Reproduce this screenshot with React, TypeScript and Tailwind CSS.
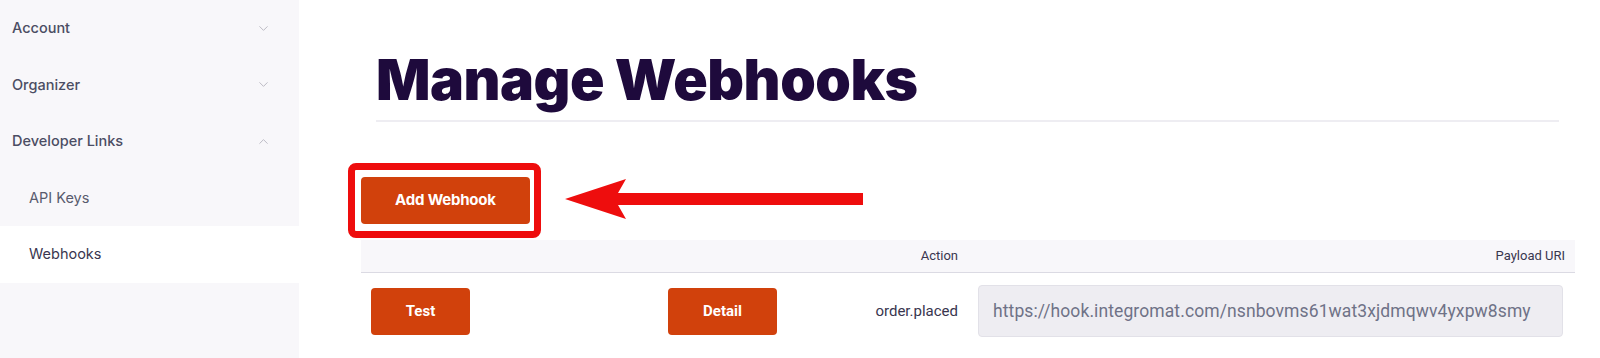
import { ChevronDown, ChevronUp } from 'lucide-react';

const sideItems = [
  { label: 'Account', open: false },
  { label: 'Organizer', open: false },
  { label: 'Developer Links', open: true },
];

function Sidebar() {
  return (
    <aside className="w-[299px] shrink-0 bg-[#f8f7fa] font-['Inter',sans-serif]">
      {sideItems.map((item) => (
        <div key={item.label} className="h-[56.5px] flex items-center justify-between pl-[12px] pr-[28px]">
          <span className="text-[14.5px] font-medium text-[#4b4d63]">{item.label}</span>
          {item.open ? (
            <ChevronUp className="w-[15px] h-[15px] text-[#b7b6c0]" strokeWidth={1.5} />
          ) : (
            <ChevronDown className="w-[15px] h-[15px] text-[#b7b6c0]" strokeWidth={1.5} />
          )}
        </div>
      ))}
      <div className="h-[56.5px] flex items-center pl-[29px] text-[14.5px] text-[#585b6e]">API Keys</div>
      <div className="h-[56.5px] flex items-center pl-[29px] text-[14.5px] text-[#39364f] bg-white">Webhooks</div>
    </aside>
  );
}

function Arrow() {
  return (
    <svg
      className="absolute left-[202px] top-[1px]"
      width="302"
      height="42"
      viewBox="0 0 302 42"
    >
      <path
        d="M2 21 L63 1 L55 15 L300 15 L300 27 L55 27 L63 41 Z"
        fill="#ee0d0d"
      />
    </svg>
  );
}

export default function App() {
  return (
    <div className="flex w-[1600px] h-[358px] overflow-hidden bg-white">
      <Sidebar />
      <main className="flex-1 pl-[62px] pr-[25px]">
        <div className="ml-[15px] mr-[16px]">
          <h1 className="mt-[51px] text-[57px] leading-[57px] font-black text-[#1e0a3c] tracking-[-0.5px] font-['Inter',sans-serif]">
            Manage Webhooks
          </h1>
          <div className="mt-[12px] h-[2px] bg-[#eeedf2]" />
        </div>

        <div className="relative mt-[55px] w-[169px]">
          <div className="absolute -left-[13px] -right-[11px] -top-[14px] -bottom-[14px] border-[7px] border-[#ee0d0d] rounded-[8px]" />
          <button className="w-[169px] h-[47px] bg-[#d1410c] rounded-[4px] text-white text-[15px] font-bold font-['Inter',sans-serif] tracking-[-0.2px]">
            Add Webhook
          </button>
          <Arrow />
        </div>

        <div className="mt-[16px] font-['Roboto',sans-serif]">
          <div className="grid grid-cols-[297px_129px_181px_1fr] h-[33px] items-center bg-[#f8f7fa] border-b border-[#dbdae3] text-[13px] text-[#39364f]">
            <div />
            <div />
            <div className="px-[10px] text-right">Action</div>
            <div className="px-[10px] text-right">Payload URI</div>
          </div>
          <div className="grid grid-cols-[297px_129px_181px_1fr] items-center pt-[12px]">
            <div className="px-[10px]">
              <button className="w-[99px] h-[47px] bg-[#d1410c] rounded-[4px] text-white text-[15px] font-bold">
                Test
              </button>
            </div>
            <div className="px-[10px]">
              <button className="w-[109px] h-[47px] bg-[#d1410c] rounded-[4px] text-white text-[15px] font-bold">
                Detail
              </button>
            </div>
            <div className="px-[10px] text-right text-[15px] text-[#39364f]">order.placed</div>
            <div className="px-[10px]">
              <div className="h-[52px] mr-[2px] flex items-center px-[14px] bg-[#eeedf2] border border-[#e2e1e8] rounded-[4px] text-[17.5px] tracking-[0.1px] text-[#6f7287] whitespace-nowrap overflow-hidden">
                https://hook.integromat.com/nsnbovms61wat3xjdmqwv4yxpw8smy
              </div>
            </div>
          </div>
        </div>
      </main>
    </div>
  );
}
